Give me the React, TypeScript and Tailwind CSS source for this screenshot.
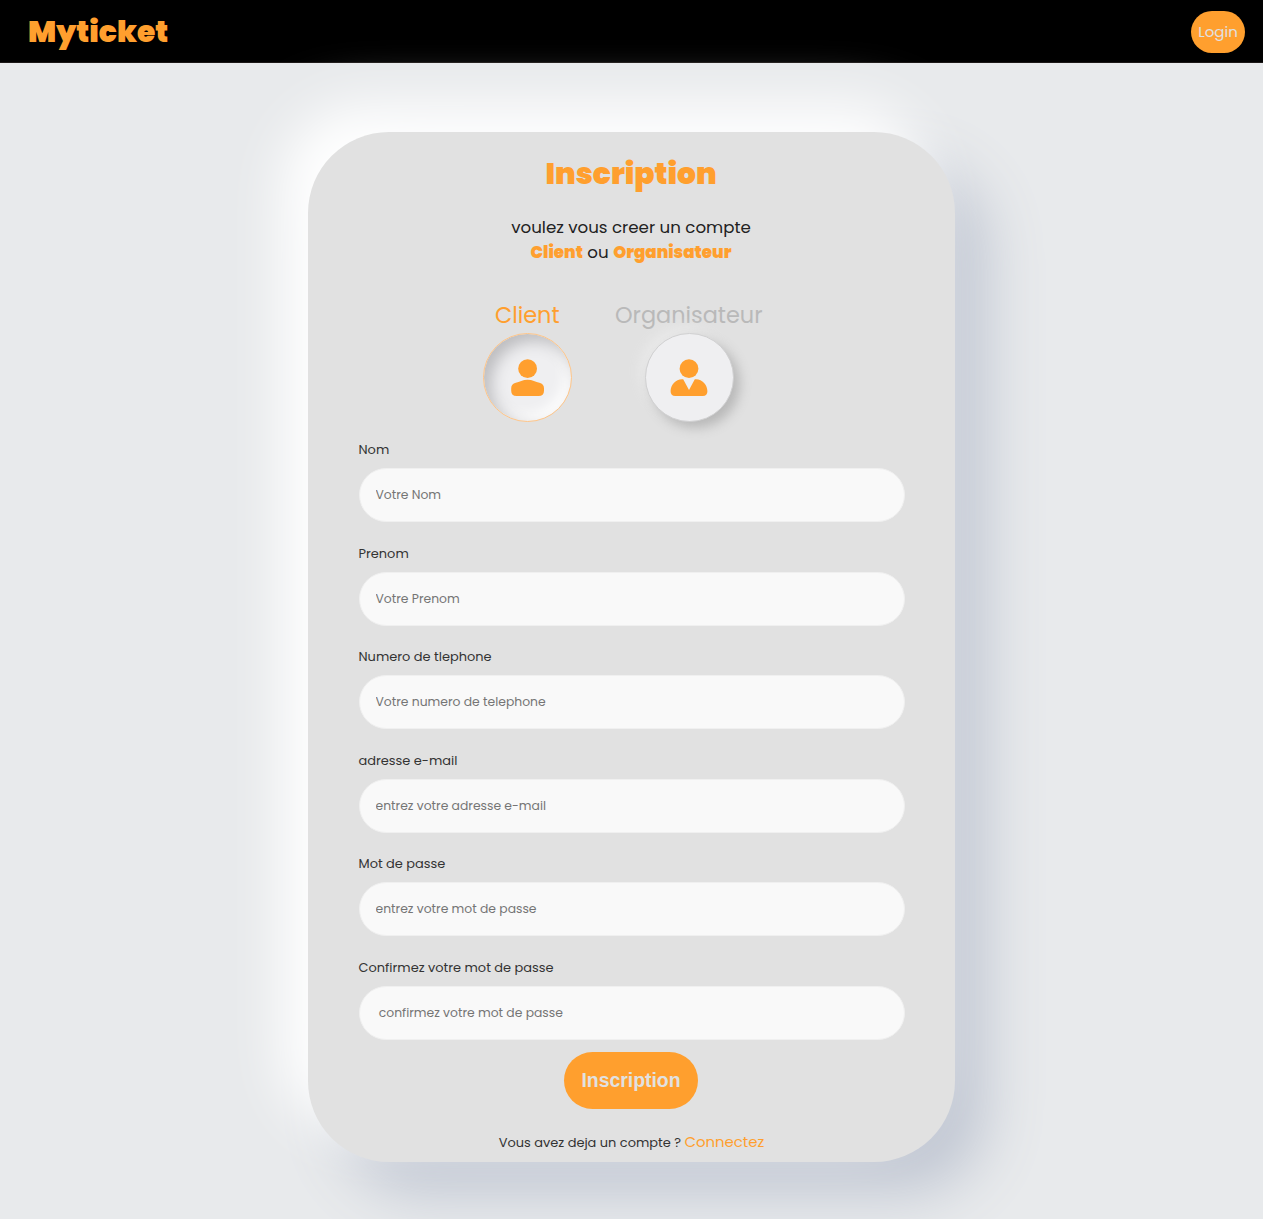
import React from "react";

const fields = [
  { label: "Nom", placeholder: "Votre Nom", type: "text" },
  { label: "Prenom", placeholder: "Votre Prenom", type: "text" },
  { label: "Numero de tlephone", placeholder: "Votre numero de telephone", type: "tel" },
  { label: "adresse e-mail", placeholder: "entrez votre adresse e-mail", type: "email" },
  { label: "Mot de passe", placeholder: "entrez votre mot de passe", type: "password" },
  { label: "Confirmez votre mot de passe", placeholder: " confirmez votre mot de passe", type: "password" },
];

function ClientIcon() {
  return (
    <svg viewBox="0 0 40 40" className="size-10 fill-[#ff9f2e]" aria-hidden="true">
      <circle cx="19.6" cy="10.7" r="9.4" />
      <path d="M7.8 24.7C11.4 23.9 14.9 21.7 19.6 21.7S27.8 23.9 31.4 24.7C34.4 25.3 36 27.3 36 30.3V32.8Q36 38 30.6 38H8.6Q3.2 38 3.2 32.8V30.3C3.2 27.3 4.8 25.3 7.8 24.7Z" />
    </svg>
  );
}

function OrganizerIcon() {
  return (
    <svg viewBox="0 0 40 40" className="size-10 fill-[#ff9f2e]" aria-hidden="true">
      <circle cx="20" cy="10.7" r="9.4" />
      <path d="M14.2 21.3L20 32.1L25.8 21.3C33 20.6 38.4 26.8 38.4 33.3Q38.4 38 33.8 38H6.2Q1.6 38 1.6 33.3C1.6 26.8 7 20.6 14.2 21.3Z" />
    </svg>
  );
}

export default function App() {
  return (
    <div className="h-[1219px] overflow-hidden bg-[#e8eaec] font-[Poppins,Inter,sans-serif] text-[#222]">
      <header className="flex h-[63px] items-center justify-between border-b border-[#1c1817] bg-black pt-[2px] pr-[18px] pl-7">
        <a className="text-[29.7px] leading-none font-black text-[#ff9f2e]">Myticket</a>
        <button className="h-[42px] w-[54px] rounded-[21px] bg-[#ff9f2e] text-[15px] text-[#e1e1e1]">Login</button>
      </header>

      <main className="mx-auto mt-[69px] flex h-[1030px] w-[647px] flex-col items-center rounded-[81px] bg-[#e1e1e1] shadow-[-27px_-27px_54px_#ffffff,32px_32px_58px_#c1c7d3]">
        <h1 className="mt-[19px] mr-px text-[29.7px] leading-[45px] font-black text-[#ff9f2e]">Inscription</h1>
        <p className="mt-[19px] mr-px text-center text-[16.65px] leading-[25px]">
          voulez vous creer un compte
          <br />
          <span className="font-black text-[#ff9f2e]">Client</span> ou{" "}
          <span className="font-black text-[#ff9f2e]">Organisateur</span>
        </p>

        <div className="mt-[33px] mr-[46px] grid grid-cols-2 text-[22.4px] leading-[34px]">
          <div className="flex w-[161.5px] flex-col items-center text-[#ff9f2e]">
            <span className="mr-px">Client</span>
            <button className="mt-px grid size-[89px] place-items-center rounded-full border border-[#ffc588] bg-[#efeff1] shadow-[inset_7px_7px_15px_#bcbcbf,inset_-5px_-5px_14px_#ffffff]">
              <ClientIcon />
            </button>
          </div>
          <div className="flex w-[161.5px] flex-col items-center text-[#b9b9b9]">
            <span className="mr-px">Organisateur</span>
            <button className="mt-px grid size-[89px] place-items-center rounded-full border border-[#d0d0d1] bg-[#efeff1] shadow-[6px_6px_12px_#b8b8b8,-6px_-6px_12px_#e9e9e9]">
              <OrganizerIcon />
            </button>
          </div>
        </div>

        <form className="mt-[18px] flex w-[546px] flex-col">
          {fields.map((field) => (
            <label key={field.label} className="flex h-[103.5px] flex-col text-[12.95px] leading-5 text-[#333]">
              {field.label}
              <input
                type={field.type}
                placeholder={field.placeholder}
                className="mt-[8.4px] h-[54px] rounded-[27px] border border-[#f0f0f0] bg-[#f9f9f9] px-4 text-[12.35px] outline-none placeholder:text-[#757575]"
              />
            </label>
          ))}
        </form>

        <button className="-mt-[9px] mr-px h-[57px] w-[134px] shrink-0 rounded-[29px] bg-[#ff9f2e] font-['Liberation_Sans',Arial,sans-serif] text-[19.4px] font-bold text-[#e1e1e1]">
          Inscription
        </button>
        <p className="mt-[21px] text-[12.95px] leading-6 text-[#333]">
          Vous avez deja un compte ? <a className="text-[14.9px] text-[#ff9f2e]">Connectez</a>
        </p>
      </main>
    </div>
  );
}
